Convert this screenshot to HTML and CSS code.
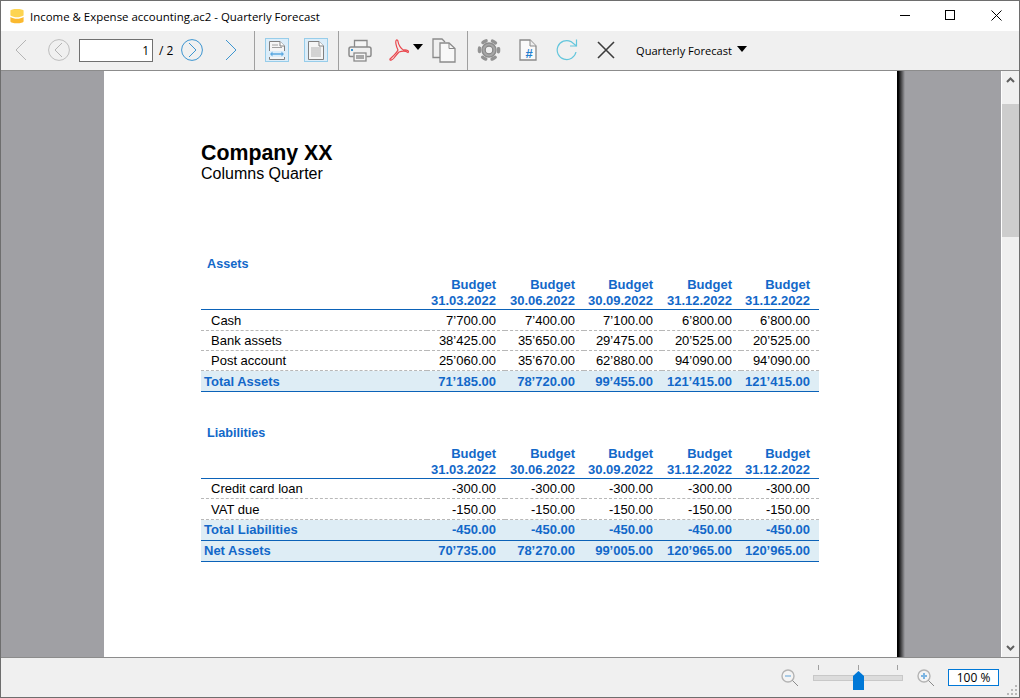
FILE: index.html
```html
<!DOCTYPE html>
<html>
<head>
    <title>Income &amp; Expense accounting.ac2 - Quarterly Forecast</title>
    <link rel="stylesheet" href="styles.css">
</head>
<body>
    <div class="window">
        <!-- Title bar -->
        <header class="titlebar">
            <svg class="app-logo" width="14" height="16" viewBox="0 0 14 17">
                <path d="M0 3 C0 0.5 14 0.5 14 3 V8 C10 10.5 4 10.5 0 8 Z" fill="#fdd451"/>
                <path d="M0 9.5 C4 12 10 12 14 9.5 V14 C14 17 0 17 0 14 Z" fill="#fbb92f"/>
            </svg>
            <span class="title-text">Income &amp; Expense accounting.ac2 - Quarterly Forecast</span>
            <div class="window-buttons">
                <svg class="win-min" width="11" height="11" viewBox="0 0 11 11"><path d="M0 5.5 H10" stroke="#000" fill="none"/></svg>
                <svg class="win-max" width="11" height="11" viewBox="0 0 11 11"><rect x="0.5" y="0.5" width="9" height="9" stroke="#000" fill="none"/></svg>
                <svg class="win-close" width="11" height="11" viewBox="0 0 11 11"><path d="M0.5 0.5 L10.5 10.5 M10.5 0.5 L0.5 10.5" stroke="#000" fill="none"/></svg>
            </div>
        </header>

        <!-- Toolbar -->
        <nav class="toolbar">
            <svg class="tb-back" width="12" height="22" viewBox="0 0 12 22"><path d="M11 1 L1 11 L11 21" stroke="#b4b4b4" fill="none"/></svg>
            <svg class="tb-prev" width="22" height="22" viewBox="0 0 22 22"><circle cx="11" cy="11" r="10.4" stroke="#bdbdbd" fill="none"/><path d="M14 4 L7 11 L14 18" stroke="#b4b4b4" fill="none"/></svg>
            <input class="page-input" type="text" value="1">
            <span class="page-count">/ 2</span>
            <svg class="tb-next" width="22" height="22" viewBox="0 0 22 22"><circle cx="11" cy="11" r="10.4" stroke="#3d95d0" fill="none"/><path d="M8 4 L15 11 L8 18" stroke="#3d95d0" fill="none"/></svg>
            <svg class="tb-last" width="12" height="22" viewBox="0 0 12 22"><path d="M1 1 L11 11 L1 21" stroke="#3d95d0" fill="none"/></svg>
            <span class="sep sep-view"></span>
            <svg class="tb-fit" width="24" height="24" viewBox="0 0 24 24">
                <rect x="0.5" y="0.5" width="23" height="23" fill="#dcedf9" stroke="#97cdea"/>
                <path d="M4.5 13 V3.5 H15 L19.5 8 V13 M4.5 19 V21.5 H19.5 V19" fill="#f5f5f5" stroke="#808080"/>
                <path d="M15 3.5 V8 H19.5" fill="#fff" stroke="#808080"/>
                <path d="M7 7 H13 M7 9.5 H17" stroke="#a0a0a0"/>
                <path d="M6 16 H18" stroke="#5ba8e0" stroke-width="1.5"/>
                <path d="M7.5 13.5 L5 16 L7.5 18.5 Z M16.5 13.5 L19 16 L16.5 18.5 Z" fill="#5ba8e0"/>
            </svg>
            <svg class="tb-page" width="24" height="24" viewBox="0 0 24 24">
                <rect x="0.5" y="0.5" width="23" height="23" fill="#dcedf9" stroke="#97cdea"/>
                <path d="M4.5 3.5 H15 L19.5 8 V21.5 H4.5 Z" fill="#f5f5f5" stroke="#808080"/>
                <path d="M15 3.5 V8 H19.5" fill="#fff" stroke="#808080"/>
                <path d="M7 10 H17 M7 12 H17 M7 14 H17 M7 16 H17 M7 18 H17" stroke="#b0b0b0"/>
            </svg>
            <span class="sep sep-print"></span>
            <svg class="tb-print" width="24" height="23" viewBox="0 0 24 23">
                <path d="M6.5 8 V1.5 H19 V8" fill="#f5f5f5" stroke="#8a8a8a" stroke-width="1.3"/>
                <path d="M5.5 17.5 H2.5 Q1 17.5 1 16 V10 Q1 8 3 8 H21 Q23 8 23 10 V16 Q23 17.5 21.5 17.5 H18.5" fill="#f0f0f0" stroke="#8a8a8a" stroke-width="1.5"/>
                <rect x="6" y="14" width="12" height="8" fill="#f5f5f5" stroke="#8a8a8a" stroke-width="1.3"/>
                <rect x="8" y="16" width="8" height="4" fill="#a8a8a8"/>
                <rect x="3" y="10" width="2" height="2" fill="#3d95d0"/>
            </svg>
            <svg class="tb-pdf" width="22" height="22" viewBox="0 0 22 22">
                <path d="M8.5 1 C7 2 8 7 10 11 C8 15 4 18 2 20 C1.5 22 4 21.5 6 19 C8 16.5 9 15 11 13 C14 12 17 11.5 20 13.5 C21.5 12 19 10.5 15.5 11 C13 10 10.5 6 10 2.5 C10 1.5 9 0.5 8.5 1 Z" fill="none" stroke="#e9474d" stroke-width="1.2"/>
            </svg>
            <span class="caret caret-pdf"></span>
            <svg class="tb-copy" width="24" height="25" viewBox="0 0 24 25">
                <path d="M8 19.5 H1 V1 H10 L13 4" fill="none" stroke="#8a8a8a" stroke-width="1.3"/>
                <path d="M8 5 H17 L23 10.5 V24 H8 Z" fill="#f8f8f8" stroke="#8a8a8a" stroke-width="1.3"/>
                <path d="M17 5 V10.5 H23" fill="none" stroke="#8a8a8a"/>
            </svg>
            <span class="sep sep-tools"></span>
            <svg class="tb-gear" width="24" height="24" viewBox="0 0 24 24">
                <circle cx="12" cy="12" r="9.6" fill="none" stroke="#939393" stroke-width="3.4" stroke-linecap="round" stroke-dasharray="3.6 6.45" stroke-dashoffset="1.8"/>
                <circle cx="12" cy="12" r="7" fill="#a6a6a6" stroke="#8c8c8c" stroke-width="1.4"/>
                <circle cx="12" cy="12" r="3.8" fill="#efefef" stroke="#858585" stroke-width="1.2"/>
            </svg>
            <svg class="tb-doc" width="18" height="22" viewBox="0 0 18 22">
                <path d="M1 1 H11 L17 7 V21 H1 Z" fill="#fafafa" stroke="#8a8a8a" stroke-width="1.3"/>
                <path d="M11 1 V7 H17" fill="#eee" stroke="#8a8a8a"/>
                <text x="10" y="18.5" class="doc-hash">#</text>
            </svg>
            <svg class="tb-refresh" width="22" height="22" viewBox="0 0 22 22">
                <path d="M20 13 A9.5 9.5 0 1 1 15 2.6 L20.5 7" fill="none" stroke="#63c6dc" stroke-width="1.2"/>
                <path d="M20.5 0.5 V7 H14" fill="none" stroke="#63c6dc" stroke-width="1.2"/>
            </svg>
            <svg class="tb-stop" width="18" height="18" viewBox="0 0 18 18"><path d="M1 1 L17 17 M17 1 L1 17" stroke="#3c3c3c" stroke-width="1.6" fill="none"/></svg>
            <span class="report-name">Quarterly Forecast</span>
            <span class="caret caret-report"></span>
        </nav>

        <!-- Preview area -->
        <main class="viewer">
            <div class="canvas">
                <div class="page">
                    <h1 class="company">Company XX</h1>
                    <p class="subtitle">Columns Quarter</p>

                    <h2 class="section-title first">Assets</h2>
                    <table class="report">
                        <colgroup><col class="c-label"><col class="c-a"><col class="c-b"><col class="c-a"><col class="c-b"><col class="c-a"></colgroup>
                        <thead>
                            <tr><th></th><th>Budget</th><th>Budget</th><th>Budget</th><th>Budget</th><th>Budget</th></tr>
                            <tr class="dates"><th></th><th>31.03.2022</th><th>30.06.2022</th><th>30.09.2022</th><th>31.12.2022</th><th>31.12.2022</th></tr>
                        </thead>
                        <tbody>
                            <tr class="tall"><td>Cash</td><td>7’700.00</td><td>7’400.00</td><td>7’100.00</td><td>6’800.00</td><td>6’800.00</td></tr>
                            <tr><td>Bank assets</td><td>38’425.00</td><td>35’650.00</td><td>29’475.00</td><td>20’525.00</td><td>20’525.00</td></tr>
                            <tr><td>Post account</td><td>25’060.00</td><td>35’670.00</td><td>62’880.00</td><td>94’090.00</td><td>94’090.00</td></tr>
                            <tr class="total"><td>Total Assets</td><td>71’185.00</td><td>78’720.00</td><td>99’455.00</td><td>121’415.00</td><td>121’415.00</td></tr>
                        </tbody>
                    </table>

                    <h2 class="section-title second">Liabilities</h2>
                    <table class="report">
                        <colgroup><col class="c-label"><col class="c-a"><col class="c-b"><col class="c-a"><col class="c-b"><col class="c-a"></colgroup>
                        <thead>
                            <tr><th></th><th>Budget</th><th>Budget</th><th>Budget</th><th>Budget</th><th>Budget</th></tr>
                            <tr class="dates"><th></th><th>31.03.2022</th><th>30.06.2022</th><th>30.09.2022</th><th>31.12.2022</th><th>31.12.2022</th></tr>
                        </thead>
                        <tbody>
                            <tr><td>Credit card loan</td><td>-300.00</td><td>-300.00</td><td>-300.00</td><td>-300.00</td><td>-300.00</td></tr>
                            <tr class="tall"><td>VAT due</td><td>-150.00</td><td>-150.00</td><td>-150.00</td><td>-150.00</td><td>-150.00</td></tr>
                            <tr class="total raised"><td>Total Liabilities</td><td>-450.00</td><td>-450.00</td><td>-450.00</td><td>-450.00</td><td>-450.00</td></tr>
                            <tr class="total raised"><td>Net Assets</td><td>70’735.00</td><td>78’270.00</td><td>99’005.00</td><td>120’965.00</td><td>120’965.00</td></tr>
                        </tbody>
                    </table>
                </div>
                <div class="page-shadow"></div>
            </div>
            <div class="scrollbar">
                <svg class="scroll-arrow" width="9" height="6" viewBox="0 0 9 6"><path d="M1 5 L4.5 1.5 L8 5" stroke="#606060" stroke-width="2" fill="none"/></svg>
                <div class="scroll-track"><div class="scroll-thumb"></div></div>
                <svg class="scroll-arrow" width="9" height="6" viewBox="0 0 9 6"><path d="M1 1 L4.5 4.5 L8 1" stroke="#606060" stroke-width="2" fill="none"/></svg>
            </div>
        </main>

        <!-- Status bar with zoom -->
        <footer class="statusbar">
            <svg class="zoom-out" width="18" height="18" viewBox="0 0 18 18">
                <circle cx="7" cy="7" r="6" fill="#f4f4f4" stroke="#b4b4b4" stroke-width="1.4"/>
                <path d="M4 7 H10" stroke="#a9cbe6" stroke-width="2"/>
                <path d="M11.5 11.5 L17 17" stroke="#8a8a8a"/>
            </svg>
            <div class="slider">
                <div class="ticks"><span></span><span></span><span></span></div>
                <div class="track"></div>
                <svg class="thumb" width="11" height="19" viewBox="0 0 11 19"><path d="M0 5 L5.5 0 L11 5 V19 H0 Z" fill="#0078d7"/></svg>
            </div>
            <svg class="zoom-in" width="18" height="18" viewBox="0 0 18 18">
                <circle cx="7" cy="7" r="6" fill="#f4f4f4" stroke="#b4b4b4" stroke-width="1.4"/>
                <path d="M4 7 H10 M7 4 V10" stroke="#7db5e2" stroke-width="2"/>
                <path d="M11.5 11.5 L17 17" stroke="#8a8a8a"/>
            </svg>
            <div class="zoom-value">100 %</div>
            <svg class="grip" width="11" height="11" viewBox="0 0 11 11">
                <path d="M8 0h2v2H8z M4 4h2v2H4z M8 4h2v2H8z M0 8h2v2H0z M4 8h2v2H4z M8 8h2v2H8z" fill="#b8b8b8"/>
            </svg>
        </footer>
    </div>
</body>
</html>
```

FILE: styles.css
```css
html, body {
    margin: 0;
    padding: 0;
}

body {
    font-family: "Open Sans", "Noto Sans", sans-serif;
    overflow: hidden;
}

.window {
    width: 1020px;
    height: 698px;
    box-sizing: border-box;
    border: 1px solid #6e6e6e;
    display: flex;
    flex-direction: column;
    background-color: #f0f0f0;
}

/* Title bar */
.titlebar {
    height: 30px;
    flex: none;
    background-color: #fff;
    display: flex;
    align-items: center;
}

.app-logo {
    margin-left: 9px;
    margin-bottom: 1px;
}

.title-text {
    margin-left: 6px;
    font-size: 11.45px;
    color: #000;
}

.window-buttons {
    margin-left: auto;
    margin-bottom: 1px;
    display: flex;
    align-items: center;
}

.win-max {
    margin-left: 34px;
}

.win-close {
    margin-left: 35px;
    margin-right: 17px;
}

/* Toolbar */
.toolbar {
    height: 40px;
    flex: none;
    box-sizing: border-box;
    border-bottom: 1px solid #8c8c8c;
    padding-bottom: 1px;
    display: flex;
    align-items: center;
}

.tb-back { margin-left: 14px; }
.tb-prev { margin-left: 21px; }

.page-input {
    width: 74px;
    height: 23px;
    box-sizing: border-box;
    margin-left: 9px;
    border: 1px solid #707070;
    background-color: #fff;
    padding: 0 3px;
    text-align: right;
    font-family: "Open Sans", sans-serif;
    font-size: 12px;
    color: #000;
}

.page-count {
    margin-left: 6px;
    width: 16px;
    font-size: 12px;
    color: #000;
    white-space: nowrap;
}

.tb-next { margin-left: 6px; }
.tb-last { margin-left: 22px; }

.sep {
    width: 1px;
    height: 39px;
    background-color: #a0a0a0;
    align-self: flex-start;
}

.sep-view { margin-left: 17px; }
.tb-fit { margin-left: 10px; }
.tb-page { margin-left: 15px; }
.sep-print { margin-left: 10px; }
.tb-print { margin-left: 9px; }
.tb-pdf { margin-left: 16px; }
.caret-pdf { margin-left: 3px; margin-top: -6px; }
.tb-copy { margin-left: 9px; }
.sep-tools { margin-left: 11px; }
.tb-gear { margin-left: 9px; }
.tb-doc { margin-left: 18px; }
.tb-refresh { margin-left: 19px; }
.tb-stop { margin-left: 19px; }

.doc-hash {
    font-family: "Liberation Sans", sans-serif;
    font-size: 13px;
    font-weight: bold;
    fill: #1f7fd0;
    text-anchor: middle;
}

.report-name {
    margin-left: 21px;
    font-size: 11.1px;
    color: #000;
}

.caret {
    width: 0;
    height: 0;
    border-left: 5.5px solid transparent;
    border-right: 5.5px solid transparent;
    border-top: 6px solid #000;
}

.caret-report {
    margin-left: 5px;
    margin-top: -3px;
}

/* Preview area */
.viewer {
    flex: 1;
    min-height: 0;
    display: flex;
}

.canvas {
    flex: 1;
    overflow: hidden;
    background-color: #a0a0a4;
    padding-left: 103px;
    display: flex;
}

.page {
    width: 793px;
    flex: none;
    box-sizing: border-box;
    background-color: #fff;
    padding: 69px 0 0 97px;
    font-family: "Liberation Sans", Arial, sans-serif;
    color: #000;
}

.page-shadow {
    width: 8px;
    flex: none;
    background: linear-gradient(to right, #000 15%, #a0a0a4);
}

.company {
    margin: 0;
    font-size: 21.33px;
    line-height: 26px;
    font-weight: bold;
}

.subtitle {
    margin: 0;
    font-size: 16px;
    line-height: 16px;
}

.section-title {
    margin: 0;
    padding-left: 6px;
    font-size: 12.67px;
    line-height: 20px;
    font-weight: bold;
    color: #1268c9;
}

.section-title.first { margin-top: 72px; }
.section-title.second { margin-top: 31px; }

.report {
    width: 618px;
    table-layout: fixed;
    border-collapse: separate;
    border-spacing: 0;
    font-size: 13px;
    margin-top: 3px;
}

.c-label { width: 226px; }
.c-a { width: 78px; }
.c-b { width: 79px; }

.report th {
    height: 16px;
    padding: 0 9px 0 0;
    line-height: 16px;
    text-align: right;
    font-weight: bold;
    color: #1268c9;
}

.report .dates th {
    height: 17px;
    border-bottom: 1px solid #0b62b8;
    box-sizing: border-box;
}

.report td {
    height: 20px;
    box-sizing: border-box;
    padding: 0 9px 0 0;
    text-align: right;
    line-height: 19px;
    border-bottom: 1px dashed #b8b8b8;
    white-space: nowrap;
}

.report td:first-child {
    padding-left: 10px;
    text-align: left;
}

.report .tall td {
    height: 21px;
}

.report .total td {
    height: 21px;
    background-color: #deedf5;
    color: #1268c9;
    font-weight: bold;
    border-bottom: 1px solid #0b62b8;
}

.report .total td:first-child {
    padding-left: 3px;
}

.report .raised td {
    padding-bottom: 1px;
}

/* Scrollbar */
.scrollbar {
    width: 17px;
    flex: none;
    background-color: #f0f0f0;
    border-left: 1px solid #fff;
    display: flex;
    flex-direction: column;
    align-items: center;
}

.scroll-arrow {
    flex: none;
    margin: 6px 0;
}

.scroll-track {
    flex: 1;
    width: 100%;
}

.scroll-thumb {
    height: 133px;
    margin-top: 15px;
    background-color: #cdcdcd;
}

/* Status bar */
.statusbar {
    height: 40px;
    flex: none;
    box-sizing: border-box;
    border-top: 1px solid #8c8c8c;
    display: flex;
    align-items: center;
    position: relative;
}

.zoom-out { margin-left: 780px; }

.slider {
    width: 90px;
    height: 26px;
    margin-left: 14px;
    position: relative;
}

.ticks {
    display: flex;
    justify-content: space-between;
    padding: 0 5px;
}

.ticks span {
    width: 1px;
    height: 5px;
    background-color: #a0a0a0;
}

.track {
    height: 4px;
    margin-top: 5px;
    background-color: #dcdcdc;
    border: 1px solid #c8c8c8;
}

.thumb {
    position: absolute;
    left: 40px;
    top: 6px;
}

.zoom-in { margin-left: 14px; }

.zoom-value {
    width: 51px;
    height: 17px;
    box-sizing: border-box;
    margin-left: 13px;
    border: 1px solid #0078d7;
    background-color: #fff;
    text-align: center;
    font-size: 12px;
    line-height: 15px;
    color: #000;
}

.grip {
    position: absolute;
    right: 1px;
    bottom: 1px;
}
```
